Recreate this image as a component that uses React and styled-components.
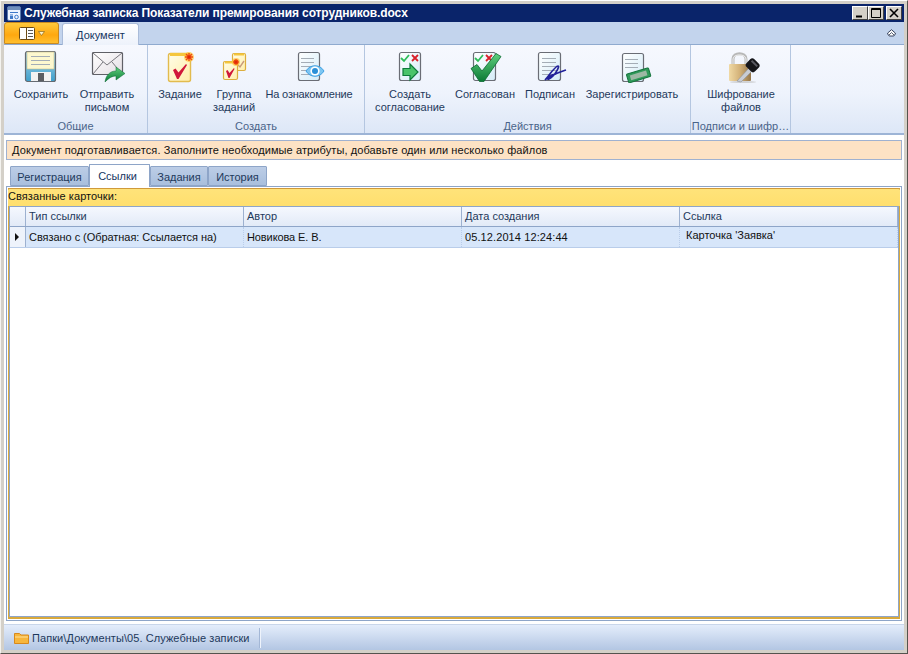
import React from "react";
import styled, { createGlobalStyle } from "styled-components";

const Global = createGlobalStyle`
  html, body { margin: 0; padding: 0; background: #d4d0c8; }
  #root { width: 908px; height: 654px; overflow: hidden; }
  * { box-sizing: border-box; }
`;

const Win = styled.div`
  width: 908px; height: 654px; background: #d4d0c8;
  border-top: 1px solid #fff; border-left: 1px solid #f4f3ef;
  border-right: 1px solid #55534e; border-bottom: 1px solid #55534e;
  padding: 3px 3px 3px 3px;
  display: flex; flex-direction: column;
  font: 11px "Liberation Sans", Arial, sans-serif; color: #1e395b;
`;
const TitleBar = styled.div`
  height: 18px; flex: none; background: #0a246a; display: flex; align-items: center;
  padding: 0 2px 0 2px; color: #fff; font-weight: 700; font-size: 12px;
`;
const TitleText = styled.span` margin-left: 2px; letter-spacing: -.1px; `;
const WinBtns = styled.div` margin-left: auto; display: flex; `;
const WinBtn = styled.div`
  width: 16px; height: 14px; margin-left: ${p => p.$gap}px; background: #d4d0c8;
  border: 1px solid; border-color: #fff #404040 #404040 #fff;
  display: flex; align-items: center; justify-content: center;
`;
const TabStrip = styled.div`
  height: 23px; flex: none; background: #c3d4ed; border-bottom: 1px solid #8faacf;
  display: flex; align-items: flex-end; position: relative;
`;
const AppBtn = styled.div`
  width: 55px; height: 22px; margin-bottom: 0; border: 1px solid #c98a22; border-radius: 3px 3px 0 0;
  background: linear-gradient(#ffc93c, #ffa80f 60%, #ffbf2f);
  display: flex; align-items: center; justify-content: center; gap: 3px;
  align-self: flex-start;
`;
const DocTab = styled.div`
  width: 77px; height: 22px; margin-left: 3px; margin-bottom: -1px; border: 1px solid #aabcd9; border-bottom: none;
  border-radius: 3px 3px 0 0; background: linear-gradient(#fff, #edf2fb);
  display: flex; align-items: center; justify-content: center; color: #15355f; padding-top: 1px;
`;
const Collapse = styled.div` margin-left: auto; margin-right: 8px; margin-bottom: 5px; height: 10px; display: flex; `;
const Ribbon = styled.div`
  height: 90px; flex: none; display: flex;
  background: linear-gradient(#f6f8fe, #eef3fc 55%, #dde7f7);
  border-bottom: 2px solid #9db4d6;
`;
const Group = styled.div`
  width: ${p => p.$w}px; flex: none; display: flex; flex-direction: column;
  border-right: 1px solid #b4c6e0;
`;
const GroupItems = styled.div`
  height: 73px; flex: none; display: flex; padding-left: ${p => p.$pad}px;
`;
const GroupLabel = styled.div`
  text-align: center; line-height: 14px; padding-top: 1px; color: #4a6489; white-space: nowrap;
`;
const RBtn = styled.div`
  width: ${p => p.$w}px; flex: none; display: flex; flex-direction: column; align-items: center;
  padding-top: 6px;
`;
const RIcon = styled.svg` width: 40px; height: 32px; flex: none; display: block; `;
const RLabel = styled.div`
  margin-top: 5px; line-height: 13px; text-align: center; color: #1e395b; white-space: nowrap;
  letter-spacing: ${p => p.$ls || 0}px;
`;
const Body = styled.div`
  flex: 1; min-height: 0; background: #fff; display: flex; flex-direction: column;
  padding: 5px 2px 3px 2px;
`;
const Notice = styled.div`
  height: 20px; flex: none; background: #fde2c4; border: 1px solid #9fb1d0;
  padding-left: 5px; line-height: 18px; color: #111; white-space: nowrap; letter-spacing: .1px;
`;
const Tabs = styled.div`
  height: 26px; flex: none; display: flex; align-items: flex-end; padding-left: 4px; position: relative; z-index: 1;
`;
const Tab = styled.div`
  width: ${p => p.$w}px; flex: none; height: ${p => p.$active ? 23 : 20}px; margin-bottom: ${p => p.$active ? -1 : 0}px;
  border: 1px solid #8ea5c8; border-bottom: ${p => p.$active ? "none" : "1px solid #8ea5c8"};
  background: ${p => p.$active ? "#fff" : "linear-gradient(#bccde6, #a9bfdd)"};
  color: ${p => p.$active ? "#15355f" : "#1e395b"};
  display: flex; align-items: center; justify-content: center;
  padding-top: ${p => p.$active ? 0 : 1}px; padding-right: ${p => p.$active ? 4 : 0}px;
  border-radius: 1px 1px 0 0;
`;
const Panel = styled.div`
  flex: 1; min-height: 0; border: 1px solid #8ea5c8; padding: 1px;
  display: flex; background: #fff;
`;
const Inner = styled.div`
  flex: 1; border: 1px solid #8ea5c8; display: flex; flex-direction: column;
  border-top: none; border-left-color: #d9a93c; border-right-color: #d9a93c; border-bottom: 2px solid #d9a93c;
  box-shadow: inset 0 -1px 0 #8ea5c8, inset 1px 0 0 #8ea5c8, inset -1px 0 0 #8ea5c8;
`;
const Caption = styled.div`
  height: 18px; flex: none; background: linear-gradient(#ffe37a, #ffdf6e); border-top: 1px solid #d09a3a;
  border-radius: 2px 2px 0 0; line-height: 15px; color: #111; margin: 0 -1px; white-space: nowrap;
  letter-spacing: .08px;
`;
const Cols = "16px 218px 218px 218px 1fr";
const HeadRow = styled.div`
  height: 21px; flex: none; display: grid; grid-template-columns: ${Cols}; margin: 0 1px;
  background: linear-gradient(#f5f8fe, #e2eaf7); border-top: 1px solid #8ea5c8; border-bottom: 1px solid #8ea5c8;
`;
const HeadCell = styled.div`
  border-right: 1px solid #9db1d0; padding-left: 3px; line-height: 19px; color: #1e395b; white-space: nowrap;
`;
const DataRow = styled.div`
  height: 21px; flex: none; display: grid; grid-template-columns: ${Cols}; margin: 0 1px;
  background: #d7e6fa; border-bottom: 1px solid #b9cdea;
`;
const Indicator = styled.div`
  background: #eef3fb; border-right: 1px solid #9db1d0; display: flex; align-items: center; justify-content: center;
  padding-right: 1px;
`;
const Cell = styled.div`
  padding-left: ${p => p.$pad || 3}px; line-height: ${p => p.$lh || 20}px; color: #111; white-space: nowrap;
  border-right: 1px dotted #b9cdea; letter-spacing: ${p => p.$ls || 0}px;
`;
const Status = styled.div`
  height: 26px; flex: none; background: linear-gradient(#e4edfb, #b3c6e3);
  display: flex; align-items: center; padding-left: 10px; color: #1e395b; border-top: 1px solid #c9d6ea; 
`;
const StatusText = styled.span`
  margin-left: 3px; padding-right: 9px; height: 20px; line-height: 20px; border-right: 1px solid #a3b7d6;
  box-shadow: 1px 0 0 #eef3fb; letter-spacing: .08px;
`;

const DocBase = ({ x, w = 23, y = 1, h = 29, fill = "url(#pap)" }) => (
  <rect x={x + .5} y={y + .5} width={w - 1} height={h - 1} rx="2" fill={fill} stroke="#6a6d75" strokeWidth="1.2" />
);
const Lines = ({ x, y, w, n = 3, g = 5 }) => (
  <g stroke="#a4adb6">{Array.from({ length: n }).map((_, i) => <path key={i} d={`M${x} ${y + i * g + .5}h${w}`} />)}</g>
);
const Star = ({ x, y, r = 4 }) => (
  <g>
    <circle cx={x} cy={y} r={r + 1} fill="#ffc23a" opacity=".7" />
    <path d={`M${x - r} ${y}H${x + r}M${x} ${y - r}V${y + r}M${x - r + 1} ${y - r + 1}L${x + r - 1} ${y + r - 1}M${x + r - 1} ${y - r + 1}L${x - r + 1} ${y + r - 1}`} stroke="#f04a10" strokeWidth="1.4" />
    <circle cx={x} cy={y} r="1.6" fill="#e02808" />
  </g>
);

const Defs = () => (
  <svg width="0" height="0" style={{ position: "absolute" }}>
    <defs>
      <linearGradient id="pap" x1="0" y1="0" x2="1" y2="1"><stop offset="0" stopColor="#fff" /><stop offset="1" stopColor="#d4ecf8" /></linearGradient>
      <linearGradient id="yel" x1="0" y1="0" x2="1" y2="1"><stop offset="0" stopColor="#fffde8" /><stop offset="1" stopColor="#ffeeaa" /></linearGradient>
      <linearGradient id="flop" x1="0" y1="0" x2="0" y2="1"><stop offset="0" stopColor="#a8d6ea" /><stop offset="1" stopColor="#3f9fcb" /></linearGradient>
      <linearGradient id="env" x1="0" y1="0" x2="1" y2="1"><stop offset="0" stopColor="#fff" /><stop offset="1" stopColor="#e4dfe4" /></linearGradient>
      <linearGradient id="grn" x1="0" y1="0" x2="0" y2="1"><stop offset="0" stopColor="#5fcf7d" /><stop offset="1" stopColor="#0b7a36" /></linearGradient>
      <linearGradient id="brass" x1="0" y1="0" x2="1" y2="0"><stop offset="0" stopColor="#f0d9a4" /><stop offset=".5" stopColor="#d2b077" /><stop offset="1" stopColor="#94764a" /></linearGradient>
    </defs>
  </svg>
);

const IconSave = () => (
  <RIcon viewBox="0 0 40 32">
    <rect x="4.5" y=".5" width="30" height="30" rx="2" fill="url(#flop)" stroke="#666b72" strokeWidth="1.2" />
    <rect x="6" y="1" width="27" height="17" fill="#fdf8cf" stroke="#c9bf8c" strokeWidth=".6" />
    <Lines x={10} y={5} w={19} n={3} g={4} />
    <rect x="10" y="21" width="20" height="9" fill="#f2f2f2" />
    <rect x="17" y="22" width="6" height="8" fill="#5a5d62" />
  </RIcon>
);
const IconMail = () => (
  <RIcon viewBox="0 0 40 32">
    <rect x="5.5" y="1.5" width="30" height="22" rx="1" fill="url(#env)" stroke="#5f6066" strokeWidth="1.2" />
    <path d="M6 2L20 14L35 2M6 23L16 11M35 23L25 11" fill="none" stroke="#77767c" />
    <path d="M18 31C19 24 23 20 29 20V16L38 22.5L29 29V25C25 25 22 27 18 31Z" fill="url(#grn)" stroke="#0c6a34" strokeWidth=".5" />
  </RIcon>
);
const IconTask = () => (
  <RIcon viewBox="0 0 40 32">
    <rect x="8.5" y="2.5" width="22" height="28" rx="2" fill="url(#yel)" stroke="#e2bb4e" strokeWidth="1.4" />
    <path d="M10 3.5H28" stroke="#f5c63c" strokeWidth="3" />
    <Star x={29} y={6} />
    <path d="M13 19L15.5 17.5L18.5 21.5L26 13L27 14L18.5 28H17Z" fill="#d0183a" />
  </RIcon>
);
const IconGroup = () => (
  <RIcon viewBox="0 0 40 32">
    <rect x="18.5" y="2.5" width="13" height="17" rx="1.5" fill="url(#yel)" stroke="#dcae3e" strokeWidth="1.2" />
    <path d="M20 3.5H30" stroke="#f5c63c" strokeWidth="2" />
    <path d="M24 14L26 16L30 10" fill="none" stroke="#c99a7a" strokeWidth="1.4" />
    <rect x="9.5" y="10.5" width="14" height="18" rx="1.5" fill="url(#yel)" stroke="#dcae3e" strokeWidth="1.2" />
    <path d="M11 11.5H22" stroke="#f5c63c" strokeWidth="2" />
    <path d="M12 20L13.5 19L15.5 22L20 17L20.5 18L15.5 27H14.5Z" fill="#d0183a" />
    <Star x={22} y={11} r={3} />
  </RIcon>
);
const IconRead = () => (
  <RIcon viewBox="0 0 40 32">
    <DocBase x={9} w={22} />
    <Lines x={12} y={7} w={13} n={5} g={4} />
    <path d="M17 20C21 13 31 13 35 20C31 27 21 27 17 20Z" fill="#7cc6f2" stroke="#3fa0e2" strokeWidth="1" />
    <circle cx="26" cy="20" r="4.6" fill="#fff" />
    <circle cx="26" cy="20" r="3" fill="#2a90d8" />
  </RIcon>
);
const MiniMarks = ({ x }) => (
  <g fill="none" strokeWidth="1.8">
    <path d={`M${x} 7L${x + 3} 10L${x + 8} 4`} stroke="#2ebd5a" />
    <path d={`M${x + 11} 4L${x + 17} 10M${x + 17} 4L${x + 11} 10`} stroke="#d8202a" />
  </g>
);
const IconCreate = () => (
  <RIcon viewBox="0 0 40 32">
    <DocBase x={9} w={22} y={1} h={29} />
    <MiniMarks x={11} />
    <path d="M13 17.5H20V13L28 21L20 29V24.5H13Z" fill="#49c46a" stroke="#0d7a3a" strokeWidth="1.2" />
  </RIcon>
);
const IconApprove = () => (
  <RIcon viewBox="0 0 40 32">
    <DocBase x={8} w={23} y={1} h={29} />
    <MiniMarks x={10} />
    <path d="M6 17.5L12 13.5L17 20L31 2.5L36 5.5L19 30.5H14.5Z" fill="url(#grn)" stroke="#0a6a30" strokeWidth=".8" />
  </RIcon>
);
const IconSign = () => (
  <RIcon viewBox="0 0 40 32">
    <DocBase x={8} w={23} />
    <Lines x={12} y={7} w={14} n={5} g={4} />
    <path d="M15 29C18 26 25 15 28 15C30 15 26 22 23 25C20 28 17 29 18 27C20 24 26 23 29 21.5C31 20.5 33 20 36 19" fill="none" stroke="#22229a" strokeWidth="1.7" />
  </RIcon>
);
const IconRegister = () => (
  <RIcon viewBox="0 0 40 32">
    <DocBase x={10} w={22} y={2} h={29} />
    <Lines x={13} y={8} w={13} n={3} g={4} />
    <g transform="rotate(-17 26 24)">
      <rect x="15" y="20" width="23" height="9" rx="1" fill="#2f9a5a" stroke="#14743c" />
      <rect x="18" y="22" width="17" height="5" fill="#9cb8a4" />
    </g>
  </RIcon>
);
const IconLock = () => (
  <RIcon viewBox="0 0 40 32">
    <path d="M12 14V8C12 1 25 1 25 8V14" fill="none" stroke="#b8b8b8" strokeWidth="3" />
    <path d="M12 14V8C12 2.5 25 2.5 25 8V14" fill="none" stroke="#eee" strokeWidth="1" />
    <rect x="8" y="13" width="22" height="17" rx="1" fill="url(#brass)" />
    <ellipse cx="22" cy="31" rx="13" ry="1" fill="#bbb" opacity=".6" />
    <path d="M16 30L28 17L31 20L20 31Z" fill="#c8ccd4" stroke="#8d929c" strokeWidth=".6" />
    <g transform="rotate(45 32 14)">
      <rect x="26" y="9" width="12" height="11" rx="3" fill="#16161a" />
      <rect x="28" y="11" width="8" height="2" fill="#5a5a62" />
    </g>
  </RIcon>
);

const Arrow = () => <svg width="6" height="8" viewBox="0 0 6 8"><path d="M1 0L5 4L1 8Z" fill="#111" /></svg>;

export default function App() {
  return (
    <>
      <Global />
      <Defs />
      <Win>
        <TitleBar>
          <svg width="16" height="17" viewBox="0 0 16 17" style={{ flex: "none" }}>
            <rect x="1.5" y="1.5" width="13" height="14" rx="1.5" fill="#eef4ff" stroke="#5a7ab0" />
            <rect x="2" y="2" width="12" height="3" fill="#6f8fbd" />
            <path d="M4 7.5H12M4 10H7" stroke="#3f79c9" />
            <rect x="4" y="11" width="3" height="3" fill="#3f79c9" />
            <circle cx="10.5" cy="12" r="1.8" fill="none" stroke="#3f79c9" />
          </svg>
          <TitleText>Служебная записка Показатели премирования сотрудников.docx</TitleText>
          <WinBtns>
            <WinBtn $gap={0}><svg width="10" height="10" viewBox="0 0 10 10"><path d="M1 8.5H7" stroke="#000" strokeWidth="2" /></svg></WinBtn>
            <WinBtn $gap={0}><svg width="10" height="10" viewBox="0 0 10 10"><path d="M.5.5H9.5V9.5H.5ZM.5 1.5H9.5" fill="none" stroke="#000" /></svg></WinBtn>
            <WinBtn $gap={2}><svg width="10" height="10" viewBox="0 0 10 10"><path d="M1 1L9 9M9 1L1 9" stroke="#000" strokeWidth="1.6" /></svg></WinBtn>
          </WinBtns>
        </TitleBar>
        <TabStrip>
          <AppBtn>
            <svg width="16" height="13" viewBox="0 0 16 13"><rect x=".5" y=".5" width="15" height="12" rx="1" fill="#fff" stroke="#6b4a12" /><path d="M7.5 1V12" stroke="#6b4a12" /><path d="M9 3.5H14M9 6.5H14M9 9.5H14" stroke="#5a5a5a" /></svg>
            <svg width="7" height="5" viewBox="0 0 7 5"><path d="M.5.5H6.5L3.5 4.5Z" fill="#fff2c8" stroke="#8a6a20" strokeWidth=".7" /></svg>
          </AppBtn>
          <DocTab>Документ</DocTab>
          <Collapse>
            <svg width="9" height="8" viewBox="0 0 9 8"><path d="M.7 4L4.5 .7L8.3 4V5L6.8 7H2.2L.7 5Z" fill="#fff" stroke="#26324e" strokeWidth=".9" /><path d="M2 6L4.5 3.6L7 6" fill="none" stroke="#26324e" strokeWidth=".8" /></svg>
          </Collapse>
        </TabStrip>
        <Ribbon>
          <Group $w={144}>
            <GroupItems $pad={4}>
              <RBtn $w={66}><IconSave /><RLabel>Сохранить</RLabel></RBtn>
              <RBtn $w={66}><IconMail /><RLabel>Отправить<br />письмом</RLabel></RBtn>
            </GroupItems>
            <GroupLabel>Общие</GroupLabel>
          </Group>
          <Group $w={217}>
            <GroupItems $pad={6}>
              <RBtn $w={52}><IconTask /><RLabel>Задание</RLabel></RBtn>
              <RBtn $w={56}><IconGroup /><RLabel>Группа<br />заданий</RLabel></RBtn>
              <RBtn $w={94}><IconRead /><RLabel $ls={-.2}>На ознакомление</RLabel></RBtn>
            </GroupItems>
            <GroupLabel>Создать</GroupLabel>
          </Group>
          <Group $w={326}>
            <GroupItems $pad={6}>
              <RBtn $w={78}><IconCreate /><RLabel>Создать<br />согласование</RLabel></RBtn>
              <RBtn $w={72}><IconApprove /><RLabel>Согласован</RLabel></RBtn>
              <RBtn $w={58}><IconSign /><RLabel>Подписан</RLabel></RBtn>
              <RBtn $w={106}><IconRegister /><RLabel>Зарегистрировать</RLabel></RBtn>
            </GroupItems>
            <GroupLabel>Действия</GroupLabel>
          </Group>
          <Group $w={100}>
            <GroupItems $pad={0}>
              <RBtn $w={100}><IconLock /><RLabel>Шифрование<br />файлов</RLabel></RBtn>
            </GroupItems>
            <GroupLabel>Подписи и шифр…</GroupLabel>
          </Group>
        </Ribbon>
        <Body>
          <Notice>Документ подготавливается. Заполните необходимые атрибуты, добавьте один или несколько файлов</Notice>
          <Tabs>
            <Tab $w={79}>Регистрация</Tab>
            <Tab $w={61} $active>Ссылки</Tab>
            <Tab $w={58}>Задания</Tab>
            <Tab $w={59}>История</Tab>
          </Tabs>
          <Panel>
            <Inner>
              <Caption>Связанные карточки:</Caption>
              <HeadRow>
                <HeadCell />
                <HeadCell>Тип ссылки</HeadCell>
                <HeadCell>Автор</HeadCell>
                <HeadCell>Дата создания</HeadCell>
                <HeadCell>Ссылка</HeadCell>
              </HeadRow>
              <DataRow>
                <Indicator><Arrow /></Indicator>
                <Cell $ls={-.05}>Связано с (Обратная: Ссылается на)</Cell>
                <Cell $ls={-.1}>Новикова Е. В.</Cell>
                <Cell $ls={.1}>05.12.2014 12:24:44</Cell>
                <Cell $pad={6} $lh={17}>Карточка 'Заявка'</Cell>
              </DataRow>
            </Inner>
          </Panel>
        </Body>
        <Status>
          <svg width="15" height="13" viewBox="0 0 15 13"><path d="M.5 2.5H5.5L7 4H14.5V12.5H.5Z" fill="#f7b63c" stroke="#d8891c" /><path d="M1 6H14" stroke="#ffe09a" /></svg>
          <StatusText>Папки\Документы\05. Служебные записки</StatusText>
        </Status>
      </Win>
    </>
  );
}
